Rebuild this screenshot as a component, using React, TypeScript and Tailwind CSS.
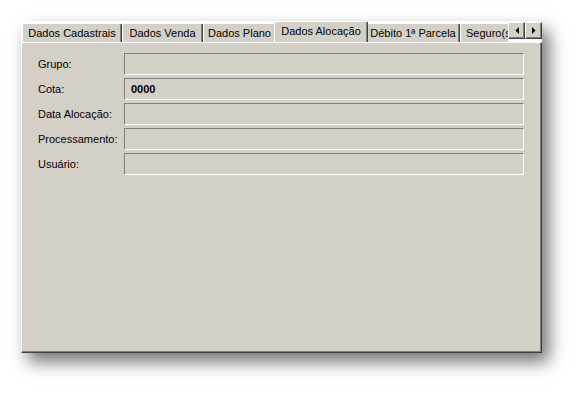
const tabs = [
  { label: "Dados Cadastrais", w: "w-[100px]" },
  { label: "Dados Venda", w: "w-[81px]" },
  { label: "Dados Plano", w: "w-[73px]" },
  { label: "Dados Alocação", w: "w-[94px]", active: true },
  { label: "Débito 1ª Parcela", w: "w-[94px]" },
  { label: "Seguro(s)", w: "w-[80px] justify-start pl-[5px]" },
];

const fields = [
  { label: "Grupo:", value: "" },
  { label: "Cota:", value: "0000" },
  { label: "Data Alocação:", value: "" },
  { label: "Processamento:", value: "" },
  { label: "Usuário:", value: "" },
];

function Arrow({ dir }: { dir: "left" | "right" }) {
  return (
    <div className="w-[17px] h-[17px] bg-[#d4d0c8] border-t border-l border-white border-r border-b border-r-[#404040] border-b-[#404040] shadow-[inset_-1px_-1px_0_#808080] flex items-center justify-center">
      <svg width="4" height="7" viewBox="0 0 4 7">
        {dir === "left" ? (
          <polygon points="4,0 4,7 0.5,3.5" fill="#000" />
        ) : (
          <polygon points="0,0 0,7 3.5,3.5" fill="#000" />
        )}
      </svg>
    </div>
  );
}

export default function App() {
  return (
    <div className="w-[584px] h-[395px] bg-white pt-[21px] pl-[21px] font-['Liberation_Sans',Arial,sans-serif] text-[11px] text-black">
      <div className="w-[521px] h-[332px] flex flex-col shadow-[7px_9px_16px_rgba(0,0,0,0.55)]">
        {/* tab strip */}
        <div className="h-[21px] flex items-end">
          <div className="flex-1 h-full flex items-end overflow-hidden pl-[1px]">
            {tabs.map((t) =>
              t.active ? (
                <div
                  key={t.label}
                  className={`${t.w} shrink-0 h-[22px] -mb-[1px] -mx-[2px] relative z-10 bg-[#d4d0c8] border-t border-l border-white border-r border-r-[#404040] shadow-[inset_-1px_0_0_#808080] rounded-t-[2px] flex items-center justify-center pb-[2px] whitespace-nowrap`}
                >
                  {t.label}
                </div>
              ) : (
                <div
                  key={t.label}
                  className={`${t.w} shrink-0 h-[19px] bg-[#d4d0c8] border-t border-l border-white border-r border-r-[#404040] shadow-[inset_-1px_0_0_#808080] rounded-t-[2px] flex items-center justify-center whitespace-nowrap`}
                >
                  {t.label}
                </div>
              )
            )}
          </div>
          <div className="flex self-start mt-[1px]">
            <Arrow dir="left" />
            <Arrow dir="right" />
          </div>
        </div>

        {/* panel */}
        <div className="flex-1 bg-[#d4d0c8] border-t border-l border-white border-r border-b border-r-[#404040] border-b-[#404040] shadow-[inset_-1px_-1px_0_#808080] pt-[10px] pl-[16px]">
          <div className="flex flex-col gap-[3px]">
            {fields.map((f) => (
              <div key={f.label} className="flex items-center">
                <div className="w-[86px] shrink-0">{f.label}</div>
                <div className="w-[400px] h-[22px] border-t border-l border-[#808080] border-r border-b border-r-white border-b-white flex items-center pl-[6px] font-bold">
                  {f.value}
                </div>
              </div>
            ))}
          </div>
        </div>
      </div>
    </div>
  );
}
